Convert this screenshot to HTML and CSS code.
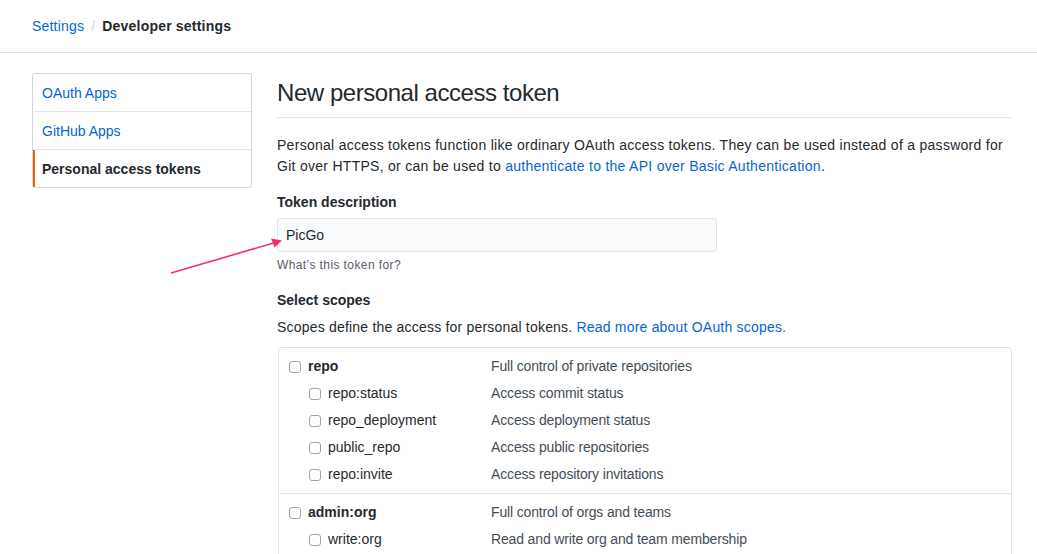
FILE: index.html
```html
<!DOCTYPE html>
<html>
<head>
<meta charset="utf-8">
<link rel="stylesheet" href="styles.css">
</head>
<body>
<header class="crumbs">
  <a class="link" href="#">Settings</a>
  <span class="sep">/</span>
  <strong>Developer settings</strong>
</header>
<div class="layout">
  <nav class="menu">
    <a class="menu-item" href="#">OAuth Apps</a>
    <a class="menu-item" href="#">GitHub Apps</a>
    <a class="menu-item selected" href="#">Personal access tokens</a>
  </nav>
  <main class="main">
    <h2 class="subhead">New personal access token</h2>
    <p class="intro">Personal access tokens function like ordinary OAuth access tokens. They can be used instead of a password for Git over HTTPS, or can be used to <a class="link" href="#">authenticate to the API over Basic Authentication</a>.</p>
    <div class="field">
      <label class="label">Token description</label>
      <div class="input-wrap">
        <input class="input" type="text" value="PicGo">
        <svg class="arrow" width="130" height="50" viewBox="0 0 130 50">
          <line x1="2" y1="46" x2="108" y2="15" stroke="#f2306d" stroke-width="1.6"/>
          <polygon points="113,13.5 102,11.5 105.5,20.5" fill="#f2306d"/>
        </svg>
      </div>
      <p class="note">What’s this token for?</p>
    </div>
    <div class="field">
      <label class="label">Select scopes</label>
      <p class="scopes-desc">Scopes define the access for personal tokens. <a class="link" href="#">Read more about OAuth scopes.</a></p>
    </div>
    <div class="scopes">
      <div class="group">
        <div class="row"><span class="name top"><input type="checkbox" class="cb"><b>repo</b></span><span class="desc">Full control of private repositories</span></div>
        <div class="row"><span class="name sub"><input type="checkbox" class="cb">repo:status</span><span class="desc">Access commit status</span></div>
        <div class="row"><span class="name sub"><input type="checkbox" class="cb">repo_deployment</span><span class="desc">Access deployment status</span></div>
        <div class="row"><span class="name sub"><input type="checkbox" class="cb">public_repo</span><span class="desc">Access public repositories</span></div>
        <div class="row"><span class="name sub"><input type="checkbox" class="cb">repo:invite</span><span class="desc">Access repository invitations</span></div>
      </div>
      <div class="group">
        <div class="row"><span class="name top"><input type="checkbox" class="cb"><b>admin:org</b></span><span class="desc">Full control of orgs and teams</span></div>
        <div class="row"><span class="name sub"><input type="checkbox" class="cb">write:org</span><span class="desc">Read and write org and team membership</span></div>
      </div>
    </div>
  </main>
</div>
</body>
</html>
```

FILE: styles.css
```css
* { box-sizing: border-box; }
html, body { margin: 0; padding: 0; background: #fff; }
body {
  font-family: "Liberation Sans", Arial, sans-serif;
  font-size: 14px;
  line-height: 21px;
  color: #24292e;
  overflow: hidden;
  height: 554px;
}
.link { color: #0366d6; text-decoration: none; }
.crumbs {
  height: 53px;
  border-bottom: 1px solid #e1e4e8;
  display: flex;
  align-items: center;
  padding: 0 0 0 32px;
  font-size: 14px;
  letter-spacing: 0.2px;
}
.crumbs .sep { color: #d1d5da; margin: 0 7px; }
.crumbs strong { font-weight: bold; color: #24292e; }
.layout {
  display: flex;
  gap: 25px;
  padding: 20px 25px 0 32px;
}
.menu {
  width: 220px;
  flex: none;
  border: 1px solid #d1d5da;
  border-radius: 3px;
  align-self: flex-start;
  display: flex;
  flex-direction: column;
}
.menu-item {
  display: block;
  height: 38px;
  line-height: 37px;
  padding: 1px 10px 0 7px;
  color: #0366d6;
  text-decoration: none;
  border-bottom: 1px solid #e1e4e8;
  border-left: 2px solid transparent;
}
.menu-item:last-child { border-bottom: 0; height: 37px; }
.menu-item.selected {
  border-left-color: #e36209;
  color: #24292e;
  font-weight: bold;
}
.main { flex: 1; min-width: 0; }
.subhead {
  margin: 5px 0 0;
  font-size: 24px;
  font-weight: normal;
  line-height: 30px;
  letter-spacing: -0.45px;
  padding-bottom: 9px;
  border-bottom: 1px solid #e1e4e8;
}
.intro { margin: 17px 0 15px; letter-spacing: 0.28px; }
.field { margin: 0; }
.label { display: block; font-weight: bold; margin-bottom: 5px; }
.input-wrap { position: relative; }
.input {
  display: block;
  width: 440px;
  height: 34px;
  padding: 6px 8px;
  font: 14px/20px "Liberation Sans", Arial, sans-serif;
  color: #24292e;
  background: #fafbfc;
  border: 1px solid #e1e4e8;
  border-radius: 3px;
  outline: none;
}
.arrow { position: absolute; left: -108px; top: 9px; overflow: visible; }
.note {
  margin: 4px 0 16px;
  font-size: 12px;
  line-height: 18px;
  letter-spacing: 0.4px;
  color: #586069;
}
.scopes-desc { margin: 6px 0 9px; letter-spacing: 0.2px; }
.scopes {
  border: 1px solid #e1e4e8;
  border-radius: 3px;
  margin-left: 1px;
}
.group { padding: 5px 0 5px; border-bottom: 1px solid #e1e4e8; }
.row {
  display: grid;
  grid-template-columns: 202px 1fr;
  height: 27px;
  line-height: 27px;
  padding-left: 10px;
}
.name { display: flex; align-items: center; gap: 7px; }
.name.sub { padding-left: 20px; }
.desc { color: #444d56; letter-spacing: -0.15px; }
.cb {
  appearance: none;
  -webkit-appearance: none;
  margin: 0;
  width: 12px;
  height: 12px;
  border: 1px solid #a0a4a8;
  border-radius: 3px;
  background: #fff;
  flex: none;
}
```
